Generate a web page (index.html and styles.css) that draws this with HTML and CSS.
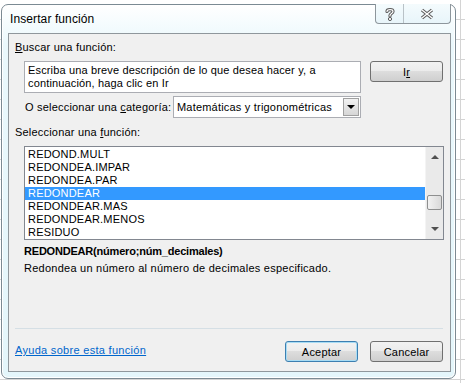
FILE: index.html
```html
<!DOCTYPE html>
<html lang="es">
<head>
  <meta charset="UTF-8" />
  <title>Insertar función</title>
  <link rel="stylesheet" href="styles.css">
</head>
<body>
  <div class="window">
    <div class="titlebar">
      <span class="title">Insertar función</span>
      <div class="caption-buttons">
        <span class="cap-btn help">
          <svg width="12" height="14" viewBox="0 0 12 14">
            <path d="M3 4.5 C3 2 9 2 9 4.5 C9 6.5 6 6.5 6 8.5 L6 9" fill="none" stroke="#5a5a5a" stroke-width="3.2" stroke-linecap="round"/>
            <path d="M3 4.5 C3 2 9 2 9 4.5 C9 6.5 6 6.5 6 8.5 L6 9" fill="none" stroke="#fff" stroke-width="1.2" stroke-linecap="round"/>
            <circle cx="6" cy="12" r="1.6" fill="#fff" stroke="#5a5a5a" stroke-width="1"/>
          </svg>
        </span>
        <span class="cap-btn close">
          <svg width="16" height="12" viewBox="0 0 16 12">
            <path d="M3 2 L13 10 M13 2 L3 10" fill="none" stroke="#5a5a5a" stroke-width="3.4"/>
            <path d="M3 2 L13 10 M13 2 L3 10" fill="none" stroke="#fff" stroke-width="1.4"/>
          </svg>
        </span>
      </div>
    </div>

    <div class="panel">
      <div class="label"><u>B</u>uscar una función:</div>

      <div class="search-row">
        <div class="search-box">Escriba una breve descripción de lo que desea hacer y, a continuación, haga clic en Ir</div>
        <button class="btn">I<u>r</u></button>
      </div>

      <div class="category-row">
        <span>O seleccionar una <u>c</u>ategoría:</span>
        <div class="select">
          <span class="select-text">Matemáticas y trigonométricas</span>
          <span class="select-arrow"></span>
        </div>
      </div>

      <div class="label list-label">Seleccionar una <u>f</u>unción:</div>

      <div class="listbox">
        <ul class="items">
          <li>REDOND.MULT</li>
          <li>REDONDEA.IMPAR</li>
          <li>REDONDEA.PAR</li>
          <li class="selected">REDONDEAR</li>
          <li>REDONDEAR.MAS</li>
          <li>REDONDEAR.MENOS</li>
          <li>RESIDUO</li>
        </ul>
        <div class="scrollbar">
          <span class="arrow up"></span>
          <span class="thumb"></span>
          <span class="arrow down"></span>
        </div>
      </div>

      <div class="syntax">REDONDEAR(número;núm_decimales)</div>
      <div class="description">Redondea un número al número de decimales especificado.</div>

      <div class="separator"></div>

      <div class="footer">
        <a href="#" class="help-link">Ayuda sobre esta función</a>
        <div class="footer-buttons">
          <button class="btn default">Aceptar</button>
          <button class="btn">Cancelar</button>
        </div>
      </div>
    </div>
  </div>
</body>
</html>
```

FILE: styles.css
```css
body {
  margin: 0;
  width: 465px;
  height: 383px;
  overflow: hidden;
  font-family: "Liberation Sans", Arial, sans-serif;
  font-size: 11px;
  letter-spacing: 0.2px;
  color: #000;
  background-color: #fff;
  background-image:
    linear-gradient(to right, transparent 460px, #d4d4d4 460px, #d4d4d4 461px, transparent 461px),
    repeating-linear-gradient(to bottom, transparent 0, transparent 19px, #d4d4d4 19px, #d4d4d4 20px);
}

.window {
  box-sizing: border-box;
  width: 455px;
  height: 375px;
  margin: 4px 0 0 1px;
  border: 1px solid #7b8a93;
  border-radius: 7px;
  padding: 0 4px 6px 6px;
  background: linear-gradient(to bottom, #ffffff 0, #eaf8fc 40px, #e4f6fb 100%);
  box-shadow: inset 0 0 0 1px #ffffff;
  display: flex;
  flex-direction: column;
}

.titlebar {
  height: 28px;
  display: flex;
  justify-content: space-between;
  align-items: flex-start;
}

.title {
  font-size: 12px;
  letter-spacing: 0.1px;
  margin: 7px 0 0 2px;
}

.caption-buttons {
  display: flex;
  margin-top: -1px;
  border: 1px solid #8d969c;
  border-top: none;
  border-radius: 0 0 4px 4px;
  background: linear-gradient(to bottom, #f4fbfd, #e8f5fa);
}

.cap-btn {
  height: 19px;
  display: flex;
  align-items: center;
  justify-content: center;
}

.cap-btn.help {
  width: 27px;
  border-right: 1px solid #b9c2c7;
}

.cap-btn.close {
  width: 46px;
}

.panel {
  flex: 1;
  box-sizing: border-box;
  border: 1px solid #8f979c;
  background: #f0f0f0;
  padding: 0 7px 0 6px;
}

.label {
  line-height: 13px;
  margin-top: 7px;
}

.search-row {
  display: flex;
  align-items: flex-start;
  margin-top: 7px;
  padding-left: 9px;
}

.search-box {
  box-sizing: border-box;
  width: 337px;
  height: 32px;
  border: 1px solid #abadb3;
  background: #fff;
  padding: 2px 3px;
  line-height: 13px;
  letter-spacing: 0.15px;
}

.btn {
  box-sizing: border-box;
  width: 73px;
  height: 21px;
  border: 1px solid #707070;
  border-radius: 3px;
  background: linear-gradient(to bottom, #f2f2f2 0, #ebebeb 50%, #dddddd 50%, #cfcfcf 100%);
  font-family: "Liberation Sans", Arial, sans-serif;
  font-size: 11px;
  letter-spacing: 0.2px;
  color: #000;
  padding: 0;
}

.search-row .btn {
  margin-left: 9px;
}

.btn.default {
  border-color: #3c7fb1;
  box-shadow: inset 0 0 0 1px #a8dcf4;
}

.category-row {
  display: flex;
  align-items: center;
  margin-top: 3px;
  padding-left: 10px;
}

.category-row > span {
  width: 148px;
}

.select {
  box-sizing: border-box;
  width: 188px;
  height: 22px;
  display: flex;
  align-items: center;
  justify-content: space-between;
  border: 1px solid #abadb3;
  background: #fff;
  padding: 0 1px 0 3px;
}

.select-arrow {
  box-sizing: border-box;
  width: 16px;
  height: 18px;
  border: 1px solid #a0a0a0;
  background: linear-gradient(to bottom, #f2f2f2, #d6d6d6);
  position: relative;
}

.select-arrow::after {
  content: "";
  position: absolute;
  left: 3px;
  top: 6px;
  border-left: 4px solid transparent;
  border-right: 4px solid transparent;
  border-top: 4px solid #000;
}

.list-label {
  margin-top: 8px;
}

.listbox {
  box-sizing: border-box;
  width: 420px;
  height: 94px;
  margin: 7px 0 0 9px;
  border: 1px solid #828790;
  background: #fff;
  display: flex;
}

.items {
  list-style: none;
  margin: 0;
  padding: 1px 0 0 0;
  flex: 1;
}

.items li {
  height: 13px;
  line-height: 13px;
  padding-left: 3px;
}

.items li.selected {
  background: #3399ff;
  color: #fff;
}

.scrollbar {
  width: 17px;
  background: #eaeaea;
  border-left: 1px solid #f4f4f4;
  position: relative;
}

.arrow {
  position: absolute;
  left: 5px;
  border-left: 4px solid transparent;
  border-right: 4px solid transparent;
}

.arrow.up {
  top: 8px;
  border-bottom: 4px solid #505050;
}

.arrow.down {
  bottom: 8px;
  border-top: 4px solid #505050;
}

.thumb {
  position: absolute;
  left: 1px;
  top: 48px;
  box-sizing: border-box;
  width: 15px;
  height: 15px;
  border: 1px solid #8e8f8f;
  border-radius: 2px;
  background: linear-gradient(to right, #f2f2f2, #d9d9d9);
}

.syntax {
  font-weight: bold;
  letter-spacing: -0.2px;
  line-height: 13px;
  margin: 5px 0 0 9px;
}

.description {
  line-height: 13px;
  letter-spacing: 0.25px;
  margin: 4px 0 0 9px;
}

.separator {
  height: 1px;
  background: #d5dfe5;
  margin-top: 53px;
}

.footer {
  display: flex;
  justify-content: space-between;
  align-items: center;
  margin-top: 12px;
}

.help-link {
  color: #0066cc;
  text-decoration: underline;
  letter-spacing: 0.3px;
  margin-top: -3px;
}

.footer-buttons {
  display: flex;
  gap: 12px;
}
```
